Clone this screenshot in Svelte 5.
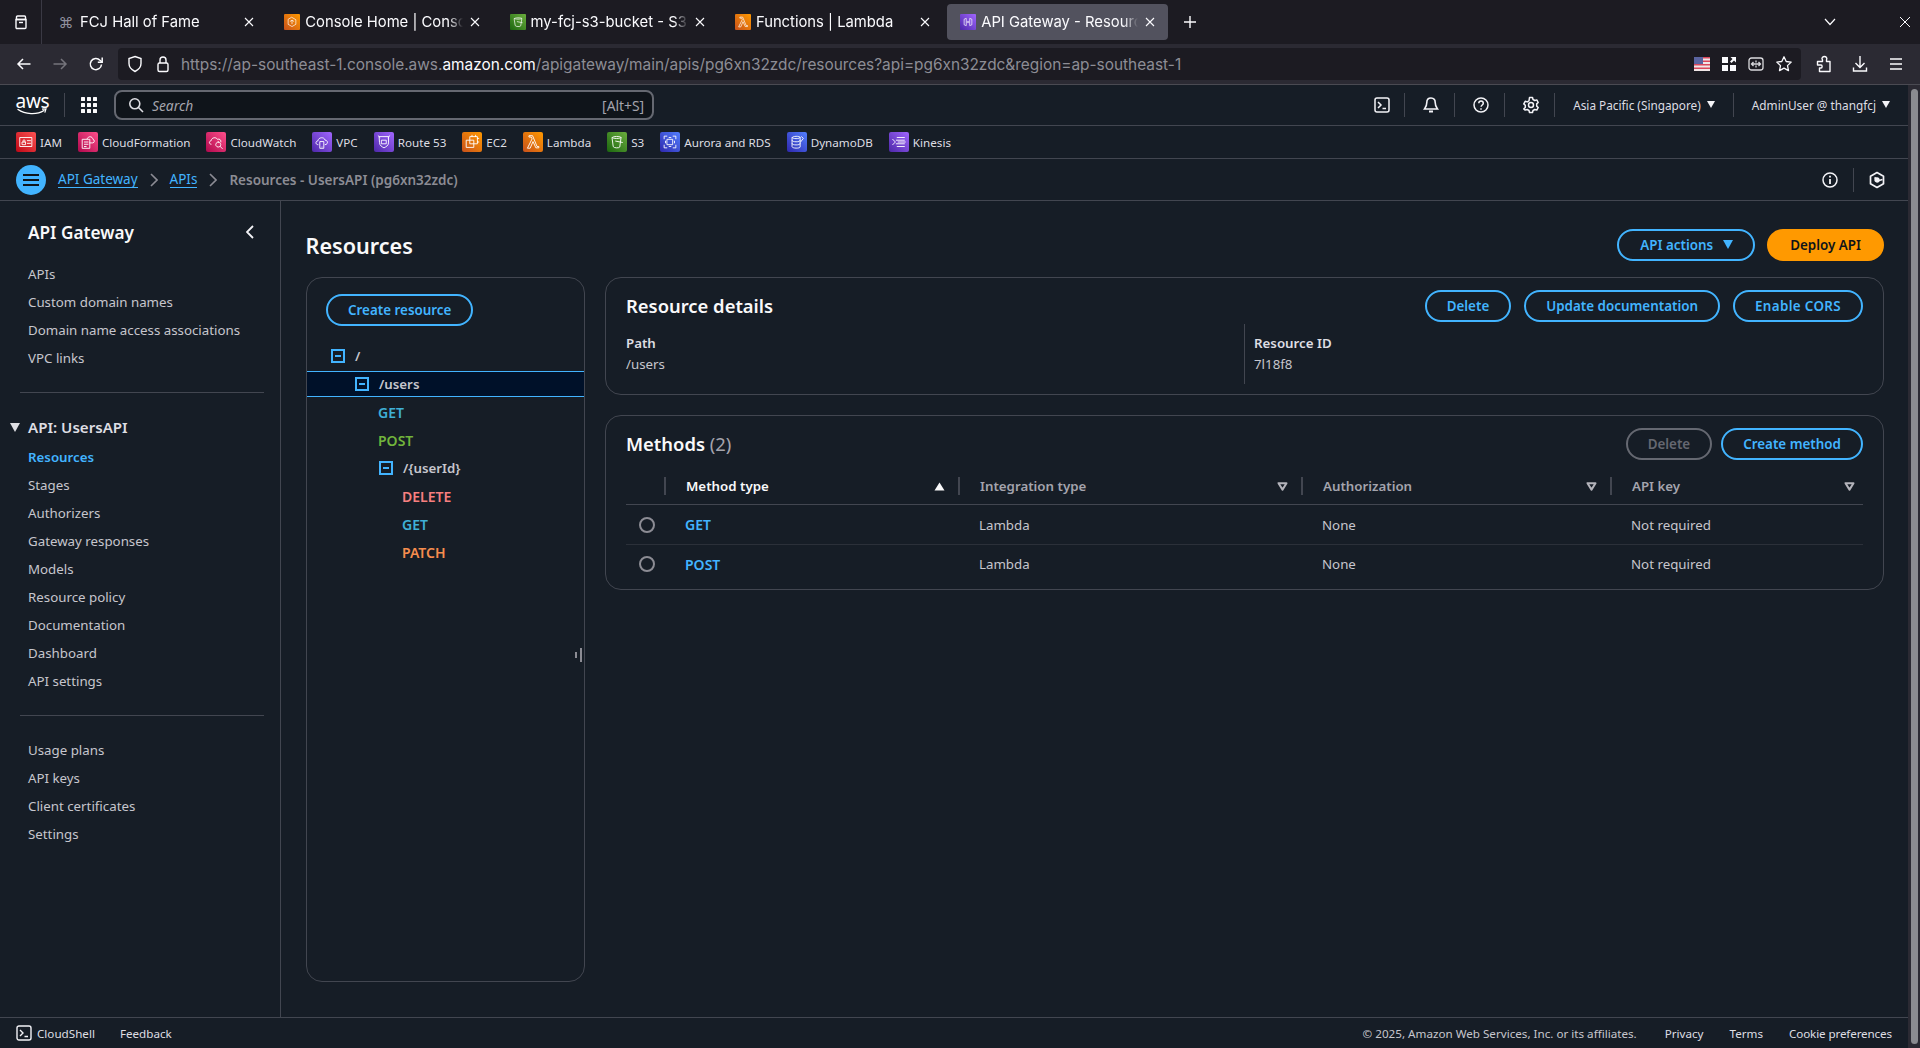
<script>
  const tabs = [
    { title: 'FCJ Hall of Fame', icon: 'fcj' },
    { title: 'Console Home | Console Home', icon: 'console', bg: 'linear-gradient(45deg,#c8511b,#ff9900)' },
    { title: 'my-fcj-s3-bucket - S3 bucket', icon: 's3', bg: 'linear-gradient(45deg,#1b660f,#6cae3e)' },
    { title: 'Functions | Lambda', icon: 'lambda', bg: 'linear-gradient(45deg,#c8511b,#ff9900)' },
    { title: 'API Gateway - Resources', icon: 'apigw', bg: 'linear-gradient(45deg,#4d27a8,#a166ff)', active: true }
  ];

  const glyphs = {
    console: ['M10 3.5l5.5 3.2v6.6L10 16.5l-5.5-3.2V6.7z', 'M10 7.5v5M7.5 9l2.5-1.5L12.500 9'],
    s3: ['M4.5 5c0-1.4 11-1.4 11 0l-1.6 10.5c-.3 1.4-7.5 1.4-7.8 0z', 'M4.5 5c0 1.4 11 1.4 11 0', 'M9 9.5l7 1.5'],
    lambda: ['M4 16.5L9 6.500 8 4.500H5.500V3H9.500L14.500 15H16.500V16.500H13.200L10 9.500 7 16.500z'],
    apigw: ['M7 5L4.5 6v8L7 15zM13 5l2.5 1v8L13 15z', 'M9 9v2M11 9v2'],
    iam: ['M3.5 5h13v10h-13z', 'M6 10h3.5v3H6zM6.8 10V8.6c0-1.5 2-1.5 2 0V10', 'M11.5 8.5H15M11.5 11.5H15'],
    cf: ['M9 6.500C10 3 15 3.500 15.500 7c2 .5 2 3.500 0 4H12', 'M4 7h8v10H4z', 'M6 10h4M6 12.500h4M6 15h2'],
    cw: ['M4.5 12.5c-2.5 0-2.5-3.5 0-3.8C5 5 10 4 11.5 7c2.5-1 4.5 1 4 3', 'M12.5 10a2.8 2.8 0 1 0 .01 0z', 'M14.5 14.8l2.5 2.5'],
    vpc: ['M5.5 13c-3 0-3-4 0-4.3C6 4.5 12.5 4 13.5 8c3.5 0 3.5 5 0 5', 'M8 9.5h4v7.5H8z', 'M10 15.5v.1'],
    route: ['M5 4h10v7c0 3-3 4.5-5 5.500C8 15.500 5 14 5 11z', 'M3.5 3l2 2M16.5 3l-2 2', 'M7.5 8h5v4h-5z'],
    ec2: ['M8 4h8v8H8z', 'M4 8h8v8H4z', 'M10 2.5V4M14 2.5V4M16 6h1.5M16 10h1.5'],
    s3b: ['M4.5 5c0-1.6 10-1.6 10 0l-1.4 10.5c-.3 1.4-6.9 1.4-7.2 0z', 'M4.5 5c0 1.6 10 1.6 10 0', 'M8.5 9l7.5 1.5'],
    rds: ['M7 7h6v6H7z', 'M3.5 6.5V3.5h3M16.5 6.5V3.5h-3M3.5 13.5v3h3M16.5 13.5v3h-3', 'M5 9v2M15 9v2M9 5h2M9 15h2'],
    ddb: ['M4.5 5c0-1.8 9-1.8 9 0v10.5c0 1.8-9 1.8-9 0z', 'M4.5 5c0 1.8 9 1.8 9 0M4.5 8.5c0 1.8 9 1.8 9 0M4.5 12c0 1.8 9 1.8 9 0', 'M15 4l2 2-3 4'],
    kin: ['M8 5h8M7 8h9M9 10h8M7 12h9M8 15h8', 'M3 7l3 3-3 3']
  };

  const services = [
    { name: 'IAM', glyph: 'iam', bg: 'linear-gradient(45deg,#bd0816,#ff5252)' },
    { name: 'CloudFormation', glyph: 'cf', bg: 'linear-gradient(45deg,#b0084d,#ff4f8b)' },
    { name: 'CloudWatch', glyph: 'cw', bg: 'linear-gradient(45deg,#b0084d,#ff4f8b)' },
    { name: 'VPC', glyph: 'vpc', bg: 'linear-gradient(45deg,#4d27a8,#a166ff)' },
    { name: 'Route 53', glyph: 'route', bg: 'linear-gradient(45deg,#4d27a8,#a166ff)' },
    { name: 'EC2', glyph: 'ec2', bg: 'linear-gradient(45deg,#c8511b,#ff9900)' },
    { name: 'Lambda', glyph: 'lambda', bg: 'linear-gradient(45deg,#c8511b,#ff9900)' },
    { name: 'S3', glyph: 's3b', bg: 'linear-gradient(45deg,#1b660f,#6cae3e)' },
    { name: 'Aurora and RDS', glyph: 'rds', bg: 'linear-gradient(45deg,#2e27ad,#527fff)' },
    { name: 'DynamoDB', glyph: 'ddb', bg: 'linear-gradient(45deg,#2e27ad,#527fff)' },
    { name: 'Kinesis', glyph: 'kin', bg: 'linear-gradient(45deg,#4d27a8,#a166ff)' }
  ];

  const navTop = ['APIs', 'Custom domain names', 'Domain name access associations', 'VPC links'];
  const navApi = ['Resources', 'Stages', 'Authorizers', 'Gateway responses', 'Models', 'Resource policy', 'Documentation', 'Dashboard', 'API settings'];
  const navBottom = ['Usage plans', 'API keys', 'Client certificates', 'Settings'];

  const columns = [
    { label: 'Method type', sorted: true },
    { label: 'Integration type' },
    { label: 'Authorization' },
    { label: 'API key' }
  ];
  const methods = ['GET', 'POST'];
</script>

{#snippet glyph(name, size)}
  <svg width={size} height={size} viewBox="0 0 20 20" fill="none" stroke="#fff" stroke-width="1" stroke-linejoin="round" stroke-linecap="round">
    {#each glyphs[name] as d}<path {d} />{/each}
  </svg>
{/snippet}

{#snippet expander()}
  <svg class="expander" width="14" height="14" viewBox="0 0 14 14" fill="none" stroke="#42b4ff" stroke-width="2">
    <rect x="1" y="1" width="12" height="12" />
    <path d="M4 7h6" />
  </svg>
{/snippet}

{#snippet filterCaret(filled)}
  <svg width="11" height="9" viewBox="0 0 11 9" class="caret">
    {#if filled}
      <path d="M5.5 0.5L10.5 8.5H0.5z" fill="#f9f9fa" />
    {:else}
      <path d="M1.5 1.2h8L5.5 7.6z" fill="none" stroke="#b4b4bb" stroke-width="2" stroke-linejoin="round" />
    {/if}
  </svg>
{/snippet}

<div class="window">
  <header class="tabbar">
    <div class="tabs-toggle">
      <svg width="16" height="16" viewBox="0 0 16 16" fill="none" stroke="#fbfbfe" stroke-width="1.4">
        <path d="M3 5.5h10v8a1 1 0 0 1-1 1H4a1 1 0 0 1-1-1z" />
        <path d="M4.5 2h7a1 1 0 0 1 1 1v2.5h-9V3a1 1 0 0 1 1-1z" />
        <path d="M6 8.5h4" />
      </svg>
    </div>
    <div class="tabs">
      {#each tabs as tab}
        <div class="tab" class:active={tab.active}>
          {#if tab.bg}
            <span class="favicon" style="background:{tab.bg}">{@render glyph(tab.icon, 14)}</span>
          {:else}
            <span class="favicon fcj">⌘</span>
          {/if}
          <span class="tab-title">{tab.title}</span>
          <svg class="tab-close" width="10" height="10" viewBox="0 0 10 10" stroke="#fbfbfe" stroke-width="1.1"><path d="M1 1l8 8M9 1l-8 8" /></svg>
        </div>
      {/each}
      <svg class="new-tab" width="14" height="14" viewBox="0 0 14 14" stroke="#fbfbfe" stroke-width="1.4"><path d="M7 1v12M1 7h12" /></svg>
    </div>
    <svg class="list-all" width="12" height="8" viewBox="0 0 12 8" fill="none" stroke="#fbfbfe" stroke-width="1.2"><path d="M1 1l5 5.5L11 1" /></svg>
    <svg class="win-close" width="12" height="12" viewBox="0 0 12 12" stroke="#fbfbfe" stroke-width="1"><path d="M1 1l10 10M11 1L1 11" /></svg>
  </header>

  <div class="toolbar">
    <svg class="tool" width="16" height="16" viewBox="0 0 16 16" fill="none" stroke="#fbfbfe" stroke-width="1.5"><path d="M14.5 8H2M7 3L2 8l5 5" /></svg>
    <svg class="tool dim" width="16" height="16" viewBox="0 0 16 16" fill="none" stroke="#75747c" stroke-width="1.5"><path d="M1.5 8H14M9 3l5 5-5 5" /></svg>
    <svg class="tool" width="16" height="16" viewBox="0 0 16 16" fill="none" stroke="#fbfbfe" stroke-width="1.5"><path d="M13.5 8.5A5.6 5.6 0 1 1 12 4.2L14 6" /><path d="M14.2 1.6V6.2H9.8" /></svg>
    <div class="urlbar">
      <svg width="16" height="18" viewBox="0 0 16 18" fill="none" stroke="#fbfbfe" stroke-width="1.4"><path d="M8 1.5l6 2v5c0 4-3 6.500-6 8-3-1.500-6-4-6-8v-5z" /></svg>
      <svg class="lock" width="14" height="18" viewBox="0 0 14 18" fill="none" stroke="#fbfbfe" stroke-width="1.4"><rect x="2" y="8" width="10" height="8.500" rx="1.500" /><path d="M4 8V5a3 3 0 0 1 6 0v3" /></svg>
      <span class="url">https://ap-southeast-1.console.aws.<b>amazon.com</b>/apigateway/main/apis/pg6xn32zdc/resources?api=pg6xn32zdc&amp;region=ap-southeast-1</span>
      <svg class="flag" width="16" height="14" viewBox="0 0 16 14">
        <rect width="16" height="14" fill="#f0e6e6" />
        <path d="M0 0h16v1.500H0zM0 3.500h16v1.500H0zM0 7h16v1.500H0zM0 10.500h16v1.500H0z" fill="#d9475c" />
        <rect width="9" height="7" fill="#5a64a0" />
      </svg>
      <svg width="16" height="16" viewBox="0 0 16 16" fill="#fbfbfe"><rect x="1" y="1" width="6" height="6" /><rect x="9" y="9" width="6" height="6" /><rect x="1" y="9" width="6" height="6" /><path d="M9.500 1h5.500v5.500l-2-2-2.500 2.500-1.500-1.500L11.500 3z" /></svg>
      <svg width="16" height="16" viewBox="0 0 16 16" fill="none" stroke="#dadade" stroke-width="1.3"><rect x="1" y="2" width="14" height="12" rx="2.500" /><path d="M3.500 8h9M5.500 6L3.500 8l2 2M10.500 6l2 2-2 2M8 4.500v2M8 9.500v2" /></svg>
      <svg width="18" height="18" viewBox="0 0 18 18" fill="none" stroke="#fbfbfe" stroke-width="1.300" stroke-linejoin="round"><path d="M9 1.800l2.200 4.700 5 .6-3.700 3.500 1 5L9 13.100l-4.500 2.500 1-5L1.800 7.100l5-.6z" /></svg>
    </div>
    <div class="tool-right">
      <svg width="16" height="18" viewBox="0 0 16 18" fill="none" stroke="#fbfbfe" stroke-width="1.400" stroke-linejoin="round"><path d="M6.500 6.500V5c-1.500-2 .5-3.500 2-3.500s3 1.500 2 3.500v1.500h3.500V16.500H3.500V13H5c1.500 0 1.500-3 0-3H1.500V6.500z" /></svg>
      <svg width="16" height="18" viewBox="0 0 16 18" fill="none" stroke="#fbfbfe" stroke-width="1.400"><path d="M8 1v11M3.500 8L8 12.500 12.500 8M1.500 12.500v3.500h13v-3.500" /></svg>
      <svg width="16" height="14" viewBox="0 0 16 14" stroke="#fbfbfe" stroke-width="1.500"><path d="M2 2h12M2 7h12M2 12h12" /></svg>
    </div>
  </div>

  <div class="page">
    <div class="console">
      <nav class="topnav">
        <span class="aws-logo">
          <span class="aws-word">aws</span>
          <svg width="31" height="8" viewBox="0 0 31 8" fill="none"><path d="M1 1.500c7 5 19 5.500 26 1" stroke="#fff" stroke-width="1.300" stroke-linecap="round" /><path d="M25 1.200l4-.2-1.200 3.600" stroke="#fff" stroke-width="1.200" /></svg>
        </span>
        <i class="nav-sep logo-sep"></i>
        <svg class="app-grid" width="16" height="16" viewBox="0 0 16 16" fill="#f9f9fa">
          {#each [0, 6, 12] as y}{#each [0, 6, 12] as x}<rect {x} {y} width="4" height="4" rx="0.500" />{/each}{/each}
        </svg>
        <div class="search">
          <svg width="16" height="16" viewBox="0 0 16 16" fill="none" stroke="#dedee3" stroke-width="1.600"><circle cx="6.800" cy="6.800" r="5" /><path d="M10.500 10.500L15 15" /></svg>
          <span class="search-hint">Search</span>
          <span class="search-key">[Alt+S]</span>
        </div>
        <div class="nav-right">
          <span class="nav-icon">
            <svg width="16" height="18" viewBox="0 0 16 18" fill="none" stroke="#f3f3f7" stroke-width="1.500"><rect x="1" y="2" width="14" height="14" rx="2" /><path d="M4 6l3 3-3 3M8.500 12.500H12" /></svg>
          </span>
          <i class="nav-sep"></i>
          <span class="nav-icon">
            <svg width="16" height="18" viewBox="0 0 16 18" fill="none" stroke="#f3f3f7" stroke-width="1.600"><path d="M8 2c-3 0-4.200 2-4.200 4.500 0 3.500-1.300 5-2.300 6.500h13c-1-1.500-2.300-3-2.300-6.500C12.200 4 11 2 8 2z" /><path d="M6 15.500h4" stroke-width="2" /></svg>
          </span>
          <i class="nav-sep"></i>
          <span class="nav-icon">
            <svg width="16" height="18" viewBox="0 0 16 18" fill="none" stroke="#f3f3f7" stroke-width="1.500"><circle cx="8" cy="9" r="7" /><path d="M5.800 7.200c0-3 4.500-3 4.500 0 0 1.800-2.200 1.800-2.200 3.600" /><path d="M8 12.300v1.400" /></svg>
          </span>
          <i class="nav-sep"></i>
          <span class="nav-icon">
            <svg width="16" height="18" viewBox="0 0 16 18" fill="none" stroke="#f3f3f7" stroke-width="1.500" stroke-linejoin="round"><path d="M6.500 1.500h3l.5 2 1.800 1 2-.6 1.400 2.600-1.500 1.400v2.200l1.500 1.400-1.400 2.600-2-.6-1.800 1-.5 2h-3l-.5-2-1.800-1-2 .6L.8 12.900l1.500-1.400V9.300L.8 7.900l1.400-2.600 2 .6 1.800-1z" /><circle cx="8" cy="9" r="2.500" /></svg>
          </span>
          <i class="nav-sep"></i>
          <span class="nav-menu">Asia Pacific (Singapore)<span class="tri"></span></span>
          <i class="nav-sep"></i>
          <span class="nav-menu">AdminUser @ thangfcj<span class="tri"></span></span>
        </div>
      </nav>

      <div class="servicebar">
        {#each services as s}
          <span class="svc">
            <span class="svc-icon" style="background:{s.bg}">{@render glyph(s.glyph, 18)}</span>
            {s.name}
          </span>
        {/each}
      </div>

      <div class="crumbbar">
        <span class="burger">
          <svg width="16" height="14" viewBox="0 0 16 14" stroke="#0f141a" stroke-width="2"><path d="M0 2h16M0 7h16M0 12h16" /></svg>
        </span>
        <a class="crumb">API Gateway</a>
        <svg class="crumb-chev" width="8" height="14" viewBox="0 0 8 14" fill="none" stroke="#8c8c94" stroke-width="1.600"><path d="M1 1l6 6-6 6" /></svg>
        <a class="crumb">APIs</a>
        <svg class="crumb-chev" width="8" height="14" viewBox="0 0 8 14" fill="none" stroke="#8c8c94" stroke-width="1.600"><path d="M1 1l6 6-6 6" /></svg>
        <span class="crumb-current">Resources - UsersAPI (pg6xn32zdc)</span>
        <div class="crumb-right">
          <svg width="16" height="16" viewBox="0 0 16 16" fill="none" stroke="#f3f3f7" stroke-width="1.500"><circle cx="8" cy="8" r="7" /><path d="M8 7v5M8 3.800v1.800" stroke-width="1.800" /></svg>
          <i class="crumb-sep"></i>
          <svg width="16" height="18" viewBox="0 0 16 18" fill="none" stroke="#f3f3f7" stroke-width="1.700" stroke-linejoin="round"><path d="M8 1.500l6.500 3.700v7.600L8 16.500l-6.500-3.700V5.200z" /><path d="M5.500 6.500L10 9.500l3.500-1" /><circle cx="8" cy="9" r="1.800" fill="#f3f3f7" /></svg>
        </div>
      </div>

      <div class="body">
        <aside class="sidebar">
          <div class="side-head">
            <h2>API Gateway</h2>
            <svg width="8" height="14" viewBox="0 0 8 14" fill="none" stroke="#f3f3f7" stroke-width="1.800"><path d="M7 1L1 7l6 6" /></svg>
          </div>
          <ul>
            {#each navTop as item}<li>{item}</li>{/each}
          </ul>
          <hr class="first" />
          <div class="side-group"><span class="group-tri"></span>API: UsersAPI</div>
          <ul>
            {#each navApi as item, i}<li class:current={i === 0}>{item}</li>{/each}
          </ul>
          <hr />
          <ul>
            {#each navBottom as item}<li>{item}</li>{/each}
          </ul>
        </aside>

        <main class="main">
          <div class="page-head">
            <h1>Resources</h1>
            <div class="actions">
              <button class="btn menu">API actions<span class="tri blue"></span></button>
              <button class="btn primary">Deploy API</button>
            </div>
          </div>

          <div class="workspace">
            <section class="tree">
              <button class="btn">Create resource</button>
              <ul class="tree-list">
                <li class="node root">{@render expander()}<span class="path">/</span></li>
                <li class="node lvl1 selected">{@render expander()}<span class="path">/users</span></li>
                <li class="node method m-get lvl2">GET</li>
                <li class="node method m-post lvl2">POST</li>
                <li class="node lvl2b">{@render expander()}<span class="path">/&#123;userId&#125;</span></li>
                <li class="node method m-delete lvl3">DELETE</li>
                <li class="node method m-get lvl3">GET</li>
                <li class="node method m-patch lvl3">PATCH</li>
              </ul>
              <span class="resize-handle"><i></i><i></i></span>
            </section>

            <div class="panels">
              <section class="panel details">
                <div class="panel-head">
                  <h3>Resource details</h3>
                  <div class="actions wide">
                    <button class="btn">Delete</button>
                    <button class="btn">Update documentation</button>
                    <button class="btn caps">Enable CORS</button>
                  </div>
                </div>
                <div class="kv">
                  <div><b>Path</b><span>/users</span></div>
                  <div class="kv-second"><b>Resource ID</b><span>7l18f8</span></div>
                </div>
              </section>

              <section class="panel methods">
                <div class="panel-head">
                  <h3>Methods <em>(2)</em></h3>
                  <div class="actions tight">
                    <button class="btn disabled">Delete</button>
                    <button class="btn">Create method</button>
                  </div>
                </div>
                <div class="table">
                  <div class="th-row">
                    <div class="th first"></div>
                    {#each columns as col}
                      <div class="th" class:sorted={col.sorted}>
                        <span>{col.label}</span>
                        {@render filterCaret(col.sorted)}
                      </div>
                    {/each}
                  </div>
                  {#each methods as m}
                    <div class="tr">
                      <div class="td radio-cell"><span class="radio"></span></div>
                      <div class="td method-link">{m}</div>
                      <div class="td">Lambda</div>
                      <div class="td">None</div>
                      <div class="td">Not required</div>
                    </div>
                  {/each}
                </div>
              </section>
            </div>
          </div>
        </main>
      </div>

      <footer class="footer">
        <svg width="16" height="16" viewBox="0 0 16 16" fill="none" stroke="#f3f3f7" stroke-width="1.400"><rect x="1" y="1" width="14" height="14" rx="2" /><path d="M4 5l3 3-3 3M8.500 11.500H12" /></svg>
        <span class="shell">CloudShell</span>
        <span class="feedback">Feedback</span>
        <div class="legal">
          <span class="copy">© 2025, Amazon Web Services, Inc. or its affiliates.</span>
          <span>Privacy</span>
          <span>Terms</span>
          <span class="cookie">Cookie preferences</span>
        </div>
      </footer>
    </div>
    <div class="scrollbar"><span></span></div>
  </div>
</div>

<style>
  :global(body) {
    margin: 0;
    background: #161d26;
    overflow: hidden;
  }

  .window {
    width: 1920px;
    height: 1048px;
    display: flex;
    flex-direction: column;
    overflow: hidden;
    font-family: 'Noto Sans', sans-serif;
    font-size: 14px;
    color: #c6c6cd;
  }

  svg { display: block; flex: none; }
  h1, h2, h3 { margin: 0; }
  ul { list-style: none; margin: 0; padding: 0; }

  /* browser chrome */
  .tabbar {
    height: 44px;
    flex: none;
    display: flex;
    align-items: center;
    background: #1c1b22;
    font-family: Inter, sans-serif;
  }
  .tabs-toggle {
    width: 42px;
    height: 44px;
    display: flex;
    align-items: center;
    justify-content: center;
    border-right: 1px solid #3a3944;
    box-sizing: border-box;
  }
  .tabs {
    flex: 1;
    display: flex;
    align-items: center;
    gap: 4px;
    padding-left: 4px;
  }
  .tab {
    width: 221.300px;
    height: 36px;
    display: flex;
    align-items: center;
    gap: 5px;
    padding: 0 13px;
    box-sizing: border-box;
    border-radius: 4px;
    color: #fbfbfe;
    font-size: 14.800px;
  }
  .tab.active { background: #52525e; }
  .favicon {
    width: 16px;
    height: 16px;
    flex: none;
    display: flex;
    align-items: center;
    justify-content: center;
    border-radius: 1px;
  }
  .favicon.fcj {
    color: #8f8f9d;
    font-size: 15px;
    margin-right: 2px;
    width: 14px;
  }
  .tab-title {
    flex: 1;
    white-space: nowrap;
    overflow: hidden;
    mask-image: linear-gradient(to left, transparent 0, #000 14px);
  }
  .tab-close { margin-left: 2px; }
  .new-tab { margin-left: 11px; }
  .list-all { margin-right: 63px; }
  .win-close { margin-right: 9px; }

  .toolbar {
    height: 41px;
    flex: none;
    display: flex;
    align-items: center;
    background: #2b2a33;
    border-bottom: 1px solid #4a4a52;
    box-sizing: border-box;
    padding-left: 16px;
  }
  .tool { margin-right: 20px; }
  .toolbar .tool:nth-child(3) { margin-right: 14px; }
  .urlbar {
    width: 1683px;
    height: 32px;
    display: flex;
    align-items: center;
    gap: 11px;
    padding-left: 9px;
    padding-right: 8px;
    box-sizing: border-box;
    background: #1c1b22;
    border-radius: 4px;
    font-family: Inter, sans-serif;
  }
  .lock { margin-left: 2px; }
  .url {
    flex: 1;
    white-space: nowrap;
    overflow: hidden;
    font-size: 15.400px;
    color: #8d8d95;
  }
  .url b { font-weight: 400; color: #fbfbfe; }
  .tool-right {
    display: flex;
    align-items: center;
    gap: 20px;
    padding-left: 15px;
  }

  /* console shell */
  .page {
    flex: 1;
    min-height: 0;
    display: flex;
  }
  .console {
    flex: 1;
    min-width: 0;
    display: flex;
    flex-direction: column;
    background: #161d26;
  }
  .scrollbar {
    width: 12px;
    flex: none;
    background: #2b2a33;
    display: flex;
    justify-content: center;
    padding: 4px 0;
    box-sizing: border-box;
  }
  .scrollbar span {
    width: 7px;
    height: 100%;
    border-radius: 4px;
    background: #8a8b90;
  }

  .topnav {
    height: 41px;
    flex: none;
    display: flex;
    align-items: center;
    padding-left: 17px;
    border-bottom: 1px solid #424650;
    box-sizing: border-box;
  }
  .aws-logo {
    width: 31px;
    display: flex;
    flex-direction: column;
    align-items: center;
    color: #fff;
  }
  .aws-word {
    font-weight: 400;
    font-size: 19px;
    line-height: 13px;
    letter-spacing: -0.300px;
  }
  .nav-sep {
    width: 1px;
    height: 24px;
    background: #424650;
    flex: none;
  }
  .logo-sep { margin: 0 16px; }
  .search {
    width: 540px;
    height: 30px;
    margin-left: 17px;
    box-sizing: border-box;
    display: flex;
    align-items: center;
    padding: 0 8px 0 12px;
    border: 2px solid #656871;
    border-radius: 8px;
    background: #0f141a;
    font-size: 13.800px;
  }
  .search-hint {
    flex: 1;
    font-style: italic;
    color: #a4a4ad;
    padding-left: 8px;
  }
  .search-key { color: #a4a4ad; }
  .nav-right {
    margin-left: auto;
    display: flex;
    align-items: center;
  }
  .nav-icon {
    width: 49px;
    box-sizing: border-box;
    padding-left: 2px;
    display: flex;
    justify-content: center;
  }
  .nav-right > .nav-icon:first-child { padding-left: 4px; }
  .nav-menu {
    display: flex;
    align-items: center;
    gap: 6px;
    padding: 0 18px;
    font-size: 11.800px;
    color: #dedee3;
    white-space: nowrap;
  }
  .tri {
    display: inline-block;
    width: 0;
    height: 0;
    border-left: 4.500px solid transparent;
    border-right: 4.500px solid transparent;
    border-top: 7px solid #f3f3f7;
    margin-top: -2px;
  }
  .tri.blue {
    border-left-width: 5.500px;
    border-right-width: 5.500px;
    border-top: 9px solid #42b4ff;
    margin: -1px 0 0 10px;
  }

  .servicebar {
    height: 33px;
    flex: none;
    display: flex;
    align-items: center;
    gap: 16px;
    padding-left: 16px;
    font-size: 11.650px;
    color: #dedee3;
    border-bottom: 1px solid #424650;
    box-sizing: border-box;
  }
  .svc {
    display: flex;
    align-items: center;
    gap: 4px;
    white-space: nowrap;
  }
  .svc-icon {
    width: 20px;
    height: 20px;
    display: flex;
    align-items: center;
    justify-content: center;
    border-radius: 2px;
  }

  .crumbbar {
    height: 42px;
    flex: none;
    display: flex;
    align-items: center;
    padding-left: 16px;
    font-size: 13.500px;
    border-bottom: 1px solid #424650;
    box-sizing: border-box;
  }
  .burger {
    width: 30px;
    height: 30px;
    border-radius: 50%;
    background: #42b4ff;
    display: flex;
    align-items: center;
    justify-content: center;
    margin-right: 12px;
  }
  .crumb {
    color: #42b4ff;
    border-bottom: 1px solid #42b4ff;
    line-height: 16px;
  }
  .crumb-chev { margin: 0 12px; }
  .crumb-current { color: #8c8c94; font-weight: 600; }
  .crumb-right {
    margin-left: auto;
    display: flex;
    align-items: center;
    padding-right: 23px;
  }
  .crumb-sep {
    width: 1px;
    height: 24px;
    background: #424650;
    margin: 0 15px;
  }

  .body {
    flex: 1;
    min-height: 0;
    display: flex;
  }

  /* side navigation */
  .sidebar {
    width: 281px;
    flex: none;
    box-sizing: border-box;
    border-right: 1px solid #424650;
    padding: 18px 16px 0 28px;
  }
  .side-head {
    height: 26px;
    display: flex;
    align-items: center;
    justify-content: space-between;
    padding-right: 10px;
    margin-bottom: 15px;
  }
  .side-head h2 {
    font-size: 17.200px;
    font-weight: 600;
    color: #f9f9fa;
  }
  .sidebar li {
    height: 28px;
    line-height: 28px;
    font-size: 13.300px;
    color: #c6c6cd;
    white-space: nowrap;
  }
  .sidebar li.current { color: #42b4ff; font-weight: 600; }
  .sidebar hr {
    border: 0;
    height: 1px;
    background: #424650;
    margin: 20px 0 20px -8px;
  }
  .sidebar hr.first { margin-bottom: 20px; }
  .side-group {
    position: relative;
    height: 28px;
    line-height: 28px;
    margin-bottom: 2px;
    font-size: 15.100px;
    font-weight: 600;
    color: #dedee3;
  }
  .group-tri {
    position: absolute;
    left: -18px;
    top: 10px;
    width: 0;
    height: 0;
    border-left: 5px solid transparent;
    border-right: 5px solid transparent;
    border-top: 9px solid #dedee3;
  }

  /* main column */
  .main {
    flex: 1;
    min-width: 0;
    padding: 28px 24px 0 24.500px;
  }
  .page-head {
    height: 32px;
    display: flex;
    align-items: center;
    justify-content: space-between;
    margin-bottom: 16px;
  }
  .page-head h1 {
    font-size: 21.600px;
    font-weight: 600;
    color: #f9f9fa;
  }
  .actions {
    display: flex;
    gap: 12px;
  }
  .actions.wide { gap: 13px; }
  .actions.tight { gap: 9px; }
  .btn {
    height: 32px;
    padding: 0 20px;
    box-sizing: border-box;
    border: 2px solid #42b4ff;
    border-radius: 20px;
    background: transparent;
    color: #42b4ff;
    font: 600 13.400px 'Noto Sans', sans-serif;
    display: flex;
    align-items: center;
    white-space: nowrap;
  }
  .btn.menu { padding: 0 20px 0 21px; }
  .btn.caps { letter-spacing: 0.350px; }
  .btn.primary {
    background: #ff9900;
    border-color: #ff9900;
    color: #0f141a;
    padding: 0 21px;
  }
  .btn.disabled {
    border-color: #656871;
    color: #656871;
  }

  .workspace {
    display: flex;
    gap: 20px;
  }

  .tree {
    position: relative;
    width: 279.500px;
    height: 705px;
    flex: none;
    box-sizing: border-box;
    padding-top: 16px;
    border: 1px solid #424650;
    border-radius: 16px;
  }
  .tree > .btn { margin-left: 19.500px; }
  .tree-list { margin-top: 16px; }
  .node {
    height: 28px;
    display: flex;
    align-items: center;
    gap: 10px;
    font-size: 13.300px;
    box-sizing: border-box;
  }
  .path { font-weight: 600; color: #c6c6cd; }
  .root { padding-left: 24.500px; }
  .lvl1 { padding-left: 48.500px; }
  .lvl2 { padding-left: 71.500px; }
  .lvl2b { padding-left: 72.500px; }
  .lvl3 { padding-left: 95.500px; }
  .selected {
    height: 26px;
    margin: 1px 0;
    background: #001129;
    border-top: 1px solid #42b4ff;
    border-bottom: 1px solid #42b4ff;
  }
  .method { font-weight: 600; font-size: 14px; }
  .m-get { color: #3fb0d6; }
  .m-post { color: #71b43c; }
  .m-delete { color: #f77f7f; }
  .m-patch { color: #f68d4e; }
  .resize-handle {
    position: absolute;
    right: 2px;
    top: 370px;
    display: flex;
    align-items: center;
    gap: 3px;
  }
  .resize-handle i {
    width: 2px;
    height: 6px;
    background: #8c8c94;
  }
  .resize-handle i + i { height: 14px; }

  .panels {
    flex: 1;
    min-width: 0;
    display: flex;
    flex-direction: column;
    gap: 20px;
  }
  .panel {
    border: 1px solid #424650;
    border-radius: 16px;
    padding: 12px 20px 0;
    box-sizing: border-box;
  }
  .details { height: 118px; }
  .methods { height: 175px; }
  .panel-head {
    height: 32px;
    display: flex;
    align-items: center;
    justify-content: space-between;
  }
  .panel-head h3 {
    font-size: 18.400px;
    font-weight: 600;
    color: #f9f9fa;
    margin-top: -2px;
  }
  .panel-head em {
    font-style: normal;
    font-weight: 400;
    color: #a4a4ad;
  }
  .kv {
    display: grid;
    grid-template-columns: 618px 1fr;
    height: 60px;
    margin-top: 2px;
    font-size: 13.300px;
  }
  .kv div {
    display: flex;
    flex-direction: column;
    justify-content: center;
    line-height: 21px;
  }
  .kv b { font-weight: 600; color: #dedee3; }
  .kv-second {
    border-left: 1px solid #424650;
    padding-left: 9px;
  }

  .table { margin-top: 17px; font-size: 13.300px; }
  .th-row, .tr {
    display: grid;
    grid-template-columns: 38px 294px 343px 309px 1fr;
  }
  .th-row {
    height: 28px;
    border-bottom: 1px solid #424650;
    box-sizing: border-box;
  }
  .th {
    height: 18px;
    display: flex;
    align-items: center;
    justify-content: space-between;
    box-sizing: border-box;
    padding: 0 13px 0 20px;
    border-left: 2px solid #424650;
    font-weight: 600;
    color: #a4a4ad;
  }
  .th:last-child { padding-right: 8px; }
  .th.first { border: 0; }
  .th.sorted { color: #f9f9fa; }
  .tr {
    height: 40px;
    align-items: center;
    border-bottom: 1px solid #2b3039;
    box-sizing: border-box;
  }
  .tr:last-child { padding-bottom: 2px; border-bottom: 0; }
  .td { padding-left: 21px; }
  .radio-cell { padding-left: 13px; }
  .radio {
    display: block;
    width: 16px;
    height: 16px;
    box-sizing: border-box;
    border: 2px solid #8c8c94;
    border-radius: 50%;
  }
  .method-link { color: #42b4ff; font-weight: 600; font-size: 14px; }

  /* footer */
  .footer {
    height: 31px;
    flex: none;
    display: flex;
    align-items: center;
    padding-left: 16px;
    border-top: 1px solid #424650;
    box-sizing: border-box;
    font-size: 11.650px;
    color: #dedee3;
  }
  .shell { margin-left: 5px; }
  .feedback { margin-left: 25px; }
  .legal {
    margin-left: auto;
    display: flex;
    gap: 26px;
    padding-right: 16px;
  }
  .copy { color: #c6c6cd; margin-right: 2px; }
  .cookie { letter-spacing: -0.120px; }
</style>
